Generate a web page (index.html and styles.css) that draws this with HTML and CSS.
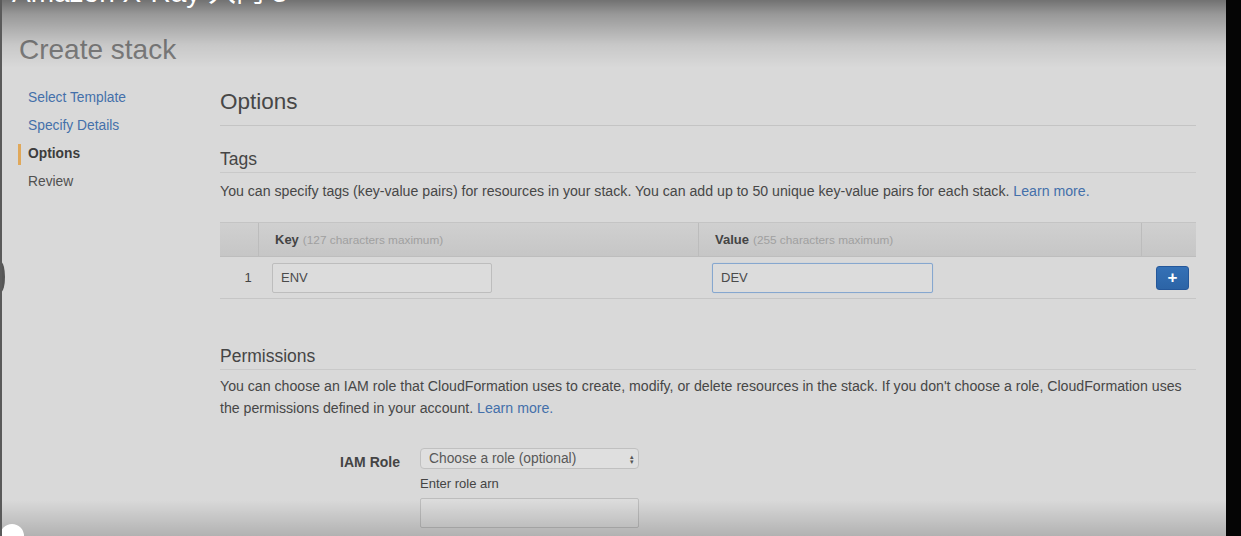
FILE: index.html
```html
<!DOCTYPE html>
<html>
<head>
<meta charset="utf-8">
<link rel="stylesheet" href="styles.css">
</head>
<body>
<div class="frame">
  <div class="screen">
    <h1 class="page-title">Create stack</h1>
    <div class="layout">
      <nav class="steps">
        <a class="step link">Select Template</a>
        <a class="step link">Specify Details</a>
        <span class="step current">Options</span>
        <span class="step">Review</span>
      </nav>
      <main class="main">
        <h2 class="main-title">Options</h2>
        <section class="section">
          <h3 class="sec-title">Tags</h3>
          <p class="desc">You can specify tags (key-value pairs) for resources in your stack. You can add up to 50 unique key-value pairs for each stack. <a class="link">Learn more.</a></p>
          <div class="tags">
            <div class="thead">
              <div class="c-num"></div>
              <div class="c-key"><b>Key</b> <span class="hint">(127 characters maximum)</span></div>
              <div class="c-val"><b>Value</b> <span class="hint">(255 characters maximum)</span></div>
              <div class="c-act"></div>
            </div>
            <div class="trow">
              <div class="c-num">1</div>
              <div class="c-key"><div class="input">ENV</div></div>
              <div class="c-val"><div class="input focus">DEV</div></div>
              <div class="c-act"><button class="plus">+</button></div>
            </div>
          </div>
        </section>
        <section class="section perms">
          <h3 class="sec-title">Permissions</h3>
          <p class="desc tall">You can choose an IAM role that CloudFormation uses to create, modify, or delete resources in the stack. If you don't choose a role, CloudFormation uses the permissions defined in your account. <a class="link">Learn more.</a></p>
          <div class="iam">
            <label class="iam-label">IAM Role</label>
            <div class="iam-fields">
              <div class="select"><span>Choose a role (optional)</span><span class="arrows">&#x25B4;<br>&#x25BE;</span></div>
              <div class="arn-label">Enter role arn</div>
              <div class="input arn"></div>
            </div>
          </div>
        </section>
      </main>
    </div>
    <div class="shade-top"></div>
    <div class="video-title">Amazon X-Ray 入门 3</div>
    <div class="shade-bottom"></div>
    <div class="edge-blob"></div>
    <div class="scrub-dot"></div>
  </div>
  <div class="side-black"></div>
</div>
</body>
</html>
```

FILE: styles.css
```css
html, body {
  margin: 0;
  padding: 0;
  height: 100%;
  overflow: hidden;
  background: #000;
}
body {
  font-family: "Liberation Sans", Arial, "Noto Sans CJK SC", sans-serif;
  color: #454545;
}
.frame {
  display: flex;
  width: 1241px;
  height: 536px;
}
.screen {
  position: relative;
  flex: 0 0 1224px;
  height: 536px;
  background: #d9d9d9;
  border-left: 2px solid #5a5a5a;
  overflow: hidden;
}
.side-black {
  flex: 1;
  background: #050505;
}
.page-title {
  margin: 0;
  padding: 34px 0 0 17px;
  font-size: 28px;
  font-weight: normal;
  color: #7d7d7d;
  line-height: 32px;
}
.layout {
  display: flex;
  margin-top: 16px;
}
.steps {
  flex: 0 0 218px;
  display: flex;
  flex-direction: column;
  padding-top: 2px;
}
.step {
  display: block;
  font-size: 13.8px;
  line-height: 28px;
  padding-left: 26px;
  color: #505050;
}
.link {
  color: #4470aa;
}
.step.current {
  font-weight: bold;
  color: #3d3d3d;
  position: relative;
}
.step.current::before {
  content: "";
  position: absolute;
  left: 16px;
  top: 4px;
  width: 3px;
  height: 21px;
  background: #e0a85a;
}
.main {
  flex: 0 0 976px;
}
.main-title {
  margin: 0;
  font-size: 22.5px;
  font-weight: normal;
  line-height: 30px;
  padding-top: 5px;
  padding-bottom: 8px;
  border-bottom: 1px solid #c4c4c4;
  color: #474747;
}
.sec-title {
  margin: 0;
  font-size: 17.5px;
  font-weight: normal;
  line-height: 24px;
  padding-bottom: 1px;
  border-bottom: 1px solid #c9c9c9;
  color: #454545;
}
.section {
  padding-top: 21px;
}
.desc {
  margin: 0;
  font-size: 14.15px;
  line-height: 22px;
  padding-top: 7px;
  color: #474747;
}
.tags {
  margin-top: 20px;
  border-bottom: 1px solid #c6c6c6;
}
.thead, .trow {
  display: flex;
}
.thead {
  height: 35px;
  background: linear-gradient(#d0d0d0, #c6c6c6);
  border-top: 1px solid #c4c4c4;
  border-bottom: 1px solid #bdbdbd;
  box-sizing: border-box;
}
.thead > div {
  border-left: 1px solid #bcbcbc;
  box-sizing: border-box;
  display: flex;
  align-items: center;
  font-size: 13px;
  color: #444;
}
.thead > div:first-child {
  border-left: none;
}
.c-num { flex: 0 0 38px; }
.c-key { flex: 0 0 440px; padding-left: 16px; }
.c-val { flex: 0 0 443px; padding-left: 16px; }
.c-act { flex: 0 0 55px; }
.thead .c-key, .thead .c-val { gap: 4px; }
.hint {
  font-size: 11.8px;
  color: #a0a0a0;
}
.trow {
  height: 41px;
  align-items: center;
}
.trow > div {
  box-sizing: border-box;
  display: flex;
  align-items: center;
}
.trow .c-num {
  justify-content: center;
  font-size: 13px;
  padding-left: 18px;
  color: #444;
}
.trow .c-key, .trow .c-val { padding-left: 14px; }
.input {
  width: 220px;
  height: 30px;
  box-sizing: border-box;
  border: 1px solid #bdbdbd;
  border-radius: 2px;
  background: #dcdcdc;
  font-size: 13px;
  line-height: 28px;
  padding-left: 8px;
  color: #4a4a4a;
}
.input.focus {
  width: 221px;
  border-color: #86a7cf;
  box-shadow: 0 0 1px #a5bedd;
}
.trow .c-act {
  justify-content: flex-end;
  padding-right: 7px;
}
.plus {
  width: 33px;
  height: 24px;
  margin-top: 0;
  border: 1px solid #24579a;
  border-radius: 3px;
  background: linear-gradient(#3571b6, #2c64a6);
  color: #fff;
  font-family: "Liberation Sans", Arial, sans-serif;
  font-size: 17px;
  font-weight: bold;
  line-height: 20px;
  padding: 0;
}
.perms {
  padding-top: 45px;
}
.desc.tall {
  padding-top: 5px;
}
.iam {
  display: flex;
  margin-top: 29px;
}
.iam-label {
  flex: 0 0 180px;
  text-align: right;
  font-size: 14px;
  font-weight: bold;
  color: #444;
  padding-top: 6px;
  box-sizing: border-box;
}
.iam-fields {
  margin-left: 20px;
  display: flex;
  flex-direction: column;
}
.select {
  width: 219px;
  height: 21px;
  box-sizing: border-box;
  border: 1px solid #c0c0c0;
  border-radius: 4px;
  background: #dfdfdf;
  display: flex;
  justify-content: space-between;
  align-items: center;
  padding: 0 4px 0 8px;
  font-size: 13.8px;
  color: #585858;
}
.arrows {
  font-size: 7px;
  line-height: 5px;
  color: #555;
}
.arn-label {
  font-size: 13px;
  color: #444;
  margin-top: 6px;
  line-height: 17px;
}
.input.arn {
  margin-top: 6px;
  width: 219px;
  height: 30px;
}
.shade-top {
  position: absolute;
  left: 0; right: 0; top: 0;
  height: 70px;
  background: linear-gradient(rgba(0,0,0,0.48) 0, rgba(0,0,0,0.3) 14px, rgba(0,0,0,0.08) 45px, rgba(0,0,0,0) 68px);
  pointer-events: none;
}
.video-title {
  position: absolute;
  left: 10px;
  top: -23px;
  font-size: 28px;
  line-height: 32px;
  color: #fff;
  white-space: nowrap;
}
.shade-bottom {
  position: absolute;
  left: 0; right: 0; bottom: 0;
  height: 36px;
  background: linear-gradient(rgba(0,0,0,0) 0, rgba(0,0,0,0.07) 14px, rgba(0,0,0,0.18) 100%);
  pointer-events: none;
}
.edge-blob {
  position: absolute;
  left: -5px;
  top: 262px;
  width: 8px;
  height: 30px;
  border-radius: 50%;
  background: #555;
}
.scrub-dot {
  position: absolute;
  left: -2px;
  top: 524px;
  width: 24px;
  height: 24px;
  border-radius: 50%;
  background: #fff;
}
```
